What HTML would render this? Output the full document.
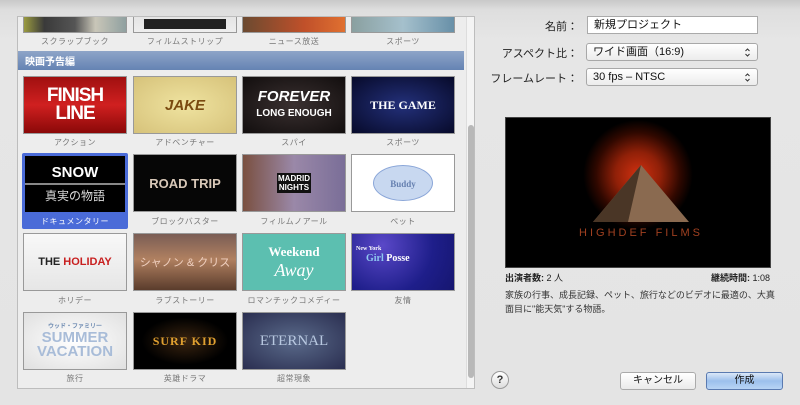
<!DOCTYPE html>
<html><head><meta charset="utf-8"><style>
*{margin:0;padding:0;box-sizing:border-box}
body{width:800px;height:405px;overflow:hidden;background:linear-gradient(#c9c9c9 0,#dedede 10px,#e6e6e6 40px,#e4e4e4 100%);font-family:"Liberation Sans","Noto Sans CJK JP",sans-serif;position:relative}
.a{position:absolute}
.panel{left:17px;top:16px;width:458px;height:373px;background:#ededed;border:1px solid #bdbdbd;overflow:hidden}
.t{position:absolute;width:104px;height:58px;border:1px solid #999;overflow:hidden;display:flex;align-items:center;justify-content:center;text-align:center}
.l{position:absolute;width:104px;font-size:8px;color:#777;text-align:center;letter-spacing:.5px}
.lbl{font-size:11px;color:#222;text-align:right;width:100px}
.fld{background:#fff;border:1px solid #aaa;font-size:11px;color:#111;padding:2px 6px;height:18px;line-height:13px}
.pop{background:linear-gradient(#fff,#ececec);border:1px solid #a8a8a8;border-radius:3px;font-size:11px;color:#111;padding:2px 6px;height:18px;line-height:13px}
.arr{position:absolute;right:7px;top:4px}
</style></head><body>
<div class="a panel">
 <div class="t" style="left:5px;top:-42px;background:linear-gradient(90deg,#9a9b40 0,#3a3a3a 20%,#555 50%,#c9c6b8 70%,#8fa0a0 100%)"></div>
 <div class="t" style="left:115px;top:-42px;background:linear-gradient(#ccc,#eee);"><div style="width:80%;height:10px;background:#222;margin-top:40px"></div></div>
 <div class="t" style="left:224px;top:-42px;background:linear-gradient(90deg,#6b4a30,#c0502a 60%,#e07030)"></div>
 <div class="t" style="left:333px;top:-42px;background:linear-gradient(90deg,#8aa0a0,#a5c0cc,#6890a8)"></div>
 <div class="l" style="left:5px;top:19px">スクラップブック</div>
 <div class="l" style="left:115px;top:19px">フィルムストリップ</div>
 <div class="l" style="left:224px;top:19px">ニュース放送</div>
 <div class="l" style="left:333px;top:19px">スポーツ</div>
 <div class="a" style="left:0;top:34px;width:446px;height:19px;background:linear-gradient(#8ea5c8,#6583b3);color:#fff;font-size:10px;padding:2px 7px;font-weight:bold">映画予告編</div>
 <div class="t" style="left:5px;top:59px;background:linear-gradient(#a01010,#d02020 50%,#8a0808);color:#fff;font:bold 19px/18px 'Liberation Sans',sans-serif;letter-spacing:-1px"><div>FINISH<br>LINE</div></div>
 <div class="t" style="left:115px;top:59px;background:radial-gradient(#efe3a0,#d6c27a);color:#7a4a10;font:bold italic 15px 'Liberation Sans',sans-serif"><div>JAKE</div></div>
 <div class="t" style="left:224px;top:59px;background:radial-gradient(#3a3030,#120e0e);color:#fff;font:bold italic 15px/15px 'Liberation Sans',sans-serif"><div>FOREVER<br><span style="font-size:10px;font-style:normal">LONG ENOUGH</span></div></div>
 <div class="t" style="left:333px;top:59px;background:radial-gradient(#23307a,#070a2a);color:#fff;font:bold 12px 'Liberation Serif',serif"><div>THE GAME</div></div>
 <div class="l" style="left:5px;top:120px">アクション</div>
 <div class="l" style="left:115px;top:120px">アドベンチャー</div>
 <div class="l" style="left:224px;top:120px">スパイ</div>
 <div class="l" style="left:333px;top:120px">スポーツ</div>
 <div class="a" style="left:4px;top:136px;width:106px;height:76px;background:#4a6bd8;border-radius:2px"></div>
 <div class="t" style="left:6px;top:138px;width:102px;height:58px;background:#000;color:#fff;flex-direction:column;border-color:#4a6bd8"><b style="font-size:15px">SNOW</b><div style="width:100%;height:2px;background:#888;margin:2px 0"></div><span style="font-size:12px;color:#ddd">真実の物語</span></div>
 <div class="l" style="left:5px;top:199px;color:#fff">ドキュメンタリー</div>
 <div class="t" style="left:115px;top:137px;background:#060606;color:#d8c8b8;font:bold 13px 'Liberation Sans',sans-serif"><div>ROAD TRIP</div></div>
 <div class="t" style="left:224px;top:137px;background:linear-gradient(90deg,#7a5040,#9a88a8 50%,#7a6e98);color:#fff;font:bold 8px 'Liberation Sans',sans-serif"><div style="background:#111;padding:1px">MADRID<br>NIGHTS</div></div>
 <div class="t" style="left:333px;top:137px;background:#fff;"><div style="width:60px;height:36px;border-radius:50%;background:#c8d8f0;border:1px solid #8aa6d8;color:#6680b0;font:bold 9px/36px 'Liberation Serif',serif">Buddy</div></div>
 <div class="l" style="left:115px;top:199px">ブロックバスター</div>
 <div class="l" style="left:224px;top:199px">フィルムノアール</div>
 <div class="l" style="left:333px;top:199px">ペット</div>
 <div class="t" style="left:5px;top:216px;background:linear-gradient(#f8f8f8,#e6e6e6);font:bold 11px 'Liberation Sans',sans-serif;color:#222"><div>THE <span style="color:#c82020">HOLIDAY</span></div></div>
 <div class="t" style="left:115px;top:216px;background:linear-gradient(#7a5d55,#b08060 45%,#5a3c2c);color:#f0d0c0;font-size:11px"><div>シャノン &amp; クリス</div></div>
 <div class="t" style="left:224px;top:216px;background:#5cbfb0;color:#fff;font:bold 13px/18px 'Liberation Serif',serif"><div>Weekend<br><i style="font-weight:normal;font-size:18px">Away</i></div></div>
 <div class="t" style="left:333px;top:216px;background:radial-gradient(circle at 30% 20%,#5a48c8,#1e1e8a 60%,#161670);color:#fff;font:bold 10px 'Liberation Serif',serif;text-align:left;display:block;padding:8px 4px"><span style="font-size:6px">New York</span><br>&nbsp;&nbsp;&nbsp;&nbsp;<span style="color:#8ec8f0">Girl</span> Posse</div>
 <div class="l" style="left:5px;top:278px">ホリデー</div>
 <div class="l" style="left:115px;top:278px">ラブストーリー</div>
 <div class="l" style="left:224px;top:278px">ロマンチックコメディー</div>
 <div class="l" style="left:333px;top:278px">友情</div>
 <div class="t" style="left:5px;top:295px;background:radial-gradient(#fff,#e0e0e0);color:#a8bcd8;font:bold 15px/14px 'Liberation Sans',sans-serif;flex-direction:column"><span style="font-size:6px;color:#6a88b0;line-height:8px">ウッド・ファミリー</span><div>SUMMER<br>VACATION</div></div>
 <div class="t" style="left:115px;top:295px;background:radial-gradient(ellipse,#3a2410,#000 60%);color:#e0a030;font:bold 12px 'Liberation Serif',serif;letter-spacing:1px"><div>SURF KID</div></div>
 <div class="t" style="left:224px;top:295px;background:radial-gradient(#5a6a8a,#2a2e50);color:#b8c8e0;font:15px 'Liberation Serif',serif"><div>ETERNAL</div></div>
 <div class="l" style="left:5px;top:356px">旅行</div>
 <div class="l" style="left:115px;top:356px">英雄ドラマ</div>
 <div class="l" style="left:224px;top:356px">超常現象</div>
 <div class="a" style="left:448px;top:0;width:9px;height:372px;background:#f4f4f4;border-left:1px solid #ddd"></div>
 <div class="a" style="left:450px;top:108px;width:6px;height:253px;background:#b8b8b8;border-radius:3px"></div>
</div>
<div class="a lbl" style="left:478px;top:18px">名前：</div>
<div class="a lbl" style="left:478px;top:45px">アスペクト比：</div>
<div class="a lbl" style="left:478px;top:70px">フレームレート：</div>
<div class="a fld" style="left:587px;top:16px;width:171px">新規プロジェクト</div>
<div class="a pop" style="left:586px;top:43px;width:172px">ワイド画面（16:9)<svg class="arr" width="5" height="9"><path d="M0.5 3L2.5 1L4.5 3M0.5 6L2.5 8L4.5 6" fill="none" stroke="#333" stroke-width="1"/></svg></div>
<div class="a pop" style="left:586px;top:68px;width:172px">30 fps – NTSC<svg class="arr" width="5" height="9"><path d="M0.5 3L2.5 1L4.5 3M0.5 6L2.5 8L4.5 6" fill="none" stroke="#333" stroke-width="1"/></svg></div>
<div class="a" style="left:505px;top:117px;width:266px;height:151px;background:radial-gradient(circle at 50% 38%,#d03010 0,#902008 14%,#300800 26%,#000 34%);border:1px solid #444"></div>
<svg class="a" style="left:505px;top:117px" width="266" height="151"><polygon points="88,105 136,48 184,105" fill="#8a6a50"/><polygon points="88,105 136,48 123,105" fill="#4a3626"/><text x="136" y="119" text-anchor="middle" fill="#a04020" font-family="Liberation Sans" font-size="11" letter-spacing="3">HIGHDEF FILMS</text></svg>
<div class="a" style="left:505px;top:271px;font-size:9px;color:#222"><b>出演者数:</b> 2 人</div>
<div class="a" style="left:680px;top:271px;width:90px;text-align:right;font-size:9px;color:#222"><b>継続時間:</b> 1:08</div>
<div class="a" style="left:505px;top:288px;width:270px;font-size:9px;line-height:14px;color:#333">家族の行事、成長記録、ペット、旅行などのビデオに最適の、大真面目に"能天気"する物語。</div>
<div class="a" style="left:491px;top:371px;width:18px;height:18px;border-radius:50%;border:1px solid #999;background:linear-gradient(#fff,#ddd);font-size:11px;font-weight:bold;text-align:center;line-height:16px;color:#333">?</div>
<div class="a" style="left:620px;top:372px;width:76px;height:18px;border:1px solid #aaa;border-radius:3px;background:linear-gradient(#fff,#eaeaea);font-size:10px;text-align:center;line-height:16px;color:#111">キャンセル</div>
<div class="a" style="left:706px;top:372px;width:77px;height:18px;border:1px solid #5a7ab0;border-radius:3px;background:linear-gradient(#dbe8f8,#9cc0ec 50%,#b8d4f4);font-size:10px;text-align:center;line-height:16px;color:#111">作成</div>
</body></html>
